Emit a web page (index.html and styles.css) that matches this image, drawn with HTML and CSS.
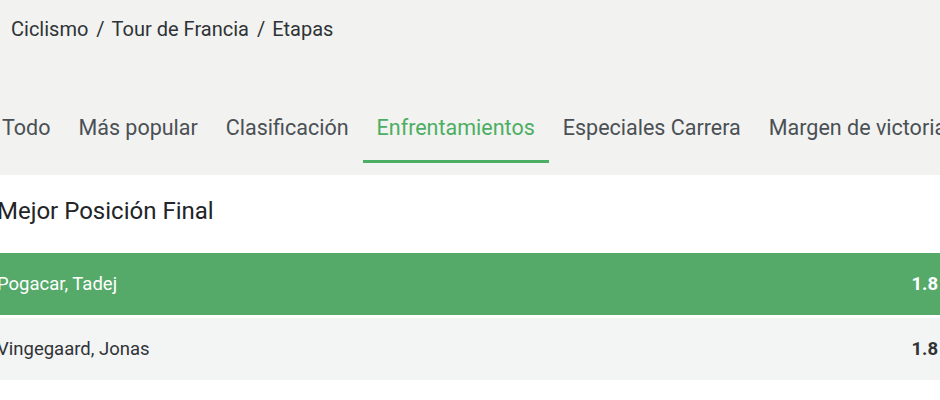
FILE: index.html
```html
<!DOCTYPE html>
<html lang="es">
<head>
<meta charset="utf-8">
<title>Etapas</title>
<link rel="stylesheet" href="styles.css">
</head>
<body>
<header class="top">
  <nav class="crumbs">
    <span>Ciclismo</span><span class="sep">/</span><span>Tour de Francia</span><span class="sep">/</span><span>Etapas</span>
  </nav>
  <ul class="tabs">
    <li class="tab">Todo</li>
    <li class="tab">Más popular</li>
    <li class="tab">Clasificación</li>
    <li class="tab active">Enfrentamientos</li>
    <li class="tab">Especiales Carrera</li>
    <li class="tab">Margen de victoria</li>
  </ul>
</header>
<main class="market">
  <h2 class="market-title">Mejor Posición Final</h2>
  <div class="rows">
    <div class="row selected"><span class="name">Pogacar, Tadej</span><span class="odds">1.8</span></div>
    <div class="row"><span class="name">Vingegaard, Jonas</span><span class="odds">1.8</span></div>
  </div>
</main>
</body>
</html>
```

FILE: styles.css
```css
html, body {
  margin: 0;
  padding: 0;
  overflow: hidden;
  background: #ffffff;
  font-family: Roboto, "Liberation Sans", sans-serif;
}

.top {
  background: #f2f2f1;
  height: 175px;
  display: flex;
  flex-direction: column;
}

.crumbs {
  padding: 17px 0 0 11px;
  font-size: 20px;
  line-height: 24px;
  color: #2f3336;
  display: flex;
}

.crumbs .sep {
  margin: 0 7px 0 8px;
}

.tabs {
  list-style: none;
  margin: 51px 0 0 -12px;
  padding: 0;
  display: flex;
  white-space: nowrap;
}

.tab {
  padding: 24px 14px 20px;
  font-size: 21.5px;
  line-height: 24px;
  color: #4a5054;
  border-bottom: 3px solid transparent;
}

.tab.active {
  color: #4cae62;
  border-bottom-color: #4cae62;
}

.market-title {
  margin: 0 0 0 -3px;
  padding: 22px 0 0 0;
  font-size: 24px;
  line-height: 28px;
  font-weight: 400;
  color: #222426;
  box-sizing: border-box;
  height: 78px;
}

.rows {
  display: flex;
  flex-direction: column;
  gap: 3px;
}

.row {
  height: 62px;
  display: flex;
  align-items: center;
  justify-content: space-between;
  background: #f3f4f4;
  color: #2f3336;
  font-size: 18.5px;
  margin-left: -3px;
  padding-right: 2px;
}

.row.selected {
  background: #55aa6a;
  color: #ffffff;
}

.odds {
  font-weight: 700;
}
```
